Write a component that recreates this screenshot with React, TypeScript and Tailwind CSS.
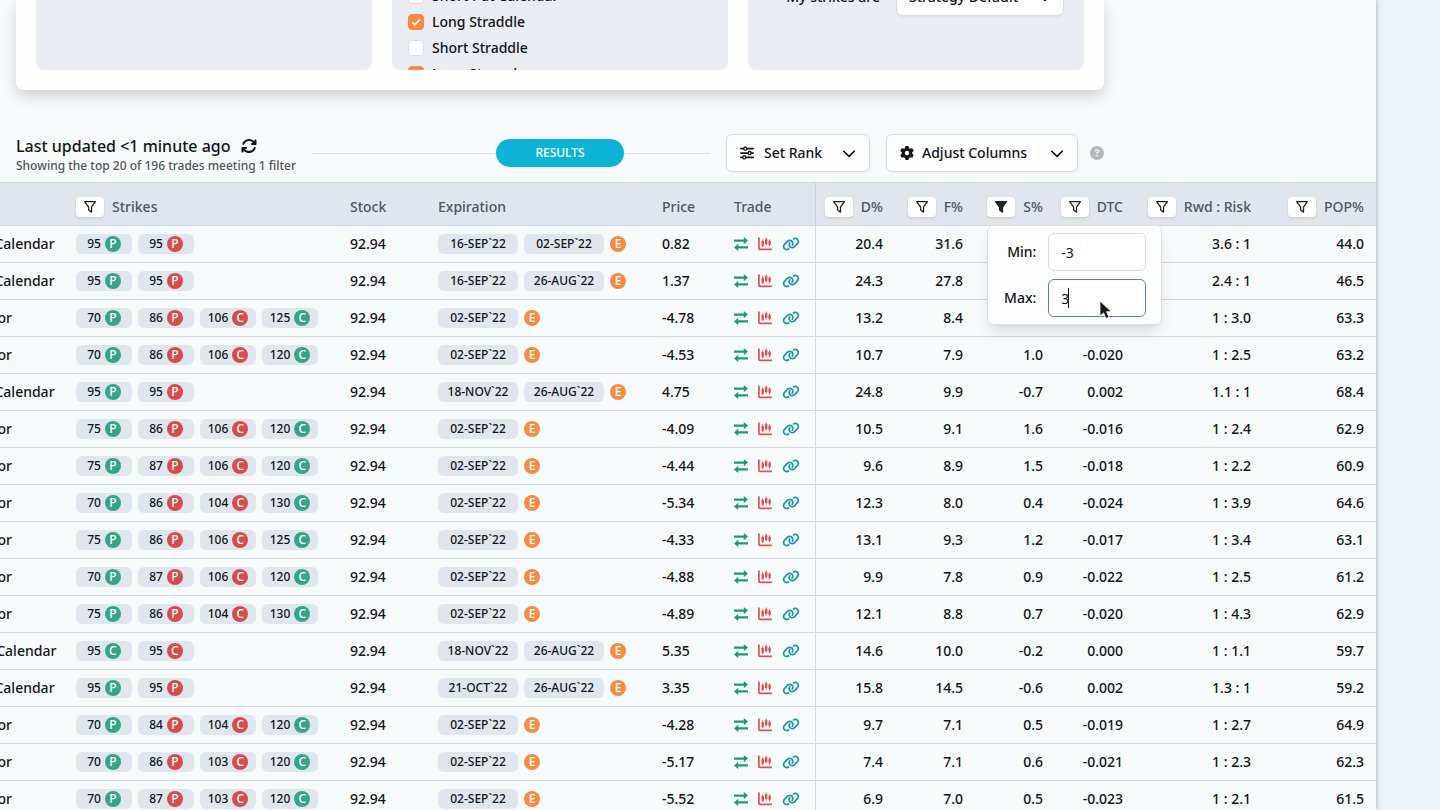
import { useEffect, useRef } from "react";
import {
    FaArrowsRotate,
    FaChevronDown,
    FaCircleQuestion,
    FaGear,
    FaLink,
    FaSliders,
} from "react-icons/fa6";

type Trade = {
    strategy: string;
    strikes: string[];
    expirations: string[];
    price: string;
    d: string;
    f: string;
    s: string;
    dtc: string;
    ratio: string;
    pop: string;
};

const row = (
    strategy: string,
    strikes: string,
    expirations: string,
    values: string
): Trade => {
    const [price, d, f, s, dtc, ratio, pop] = values.split(" ");
    return {
        strategy,
        strikes: strikes.split(" "),
        expirations: expirations.split(" "),
        price,
        d,
        f,
        s,
        dtc,
        ratio: ratio.replace(":", " : "),
        pop,
    };
};

// strikes: price, option type, then + for long or - for short
const trades: Trade[] = [
    row("Long Put Calendar", "95P+ 95P-", "16-SEP`22 02-SEP`22", "0.82 20.4 31.6   3.6:1 44.0"),
    row("Long Put Calendar", "95P+ 95P-", "16-SEP`22 26-AUG`22", "1.37 24.3 27.8   2.4:1 46.5"),
    row("Iron Condor", "70P+ 86P- 106C- 125C+", "02-SEP`22", "-4.78 13.2 8.4   1:3.0 63.3"),
    row("Iron Condor", "70P+ 86P- 106C- 120C+", "02-SEP`22", "-4.53 10.7 7.9 1.0 -0.020 1:2.5 63.2"),
    row("Long Put Calendar", "95P+ 95P-", "18-NOV`22 26-AUG`22", "4.75 24.8 9.9 -0.7 0.002 1.1:1 68.4"),
    row("Iron Condor", "75P+ 86P- 106C- 120C+", "02-SEP`22", "-4.09 10.5 9.1 1.6 -0.016 1:2.4 62.9"),
    row("Iron Condor", "75P+ 87P- 106C- 120C+", "02-SEP`22", "-4.44 9.6 8.9 1.5 -0.018 1:2.2 60.9"),
    row("Iron Condor", "70P+ 86P- 104C- 130C+", "02-SEP`22", "-5.34 12.3 8.0 0.4 -0.024 1:3.9 64.6"),
    row("Iron Condor", "75P+ 86P- 106C- 125C+", "02-SEP`22", "-4.33 13.1 9.3 1.2 -0.017 1:3.4 63.1"),
    row("Iron Condor", "70P+ 87P- 106C- 120C+", "02-SEP`22", "-4.88 9.9 7.8 0.9 -0.022 1:2.5 61.2"),
    row("Iron Condor", "75P+ 86P- 104C- 130C+", "02-SEP`22", "-4.89 12.1 8.8 0.7 -0.020 1:4.3 62.9"),
    row("Long Call Calendar", "95C+ 95C-", "18-NOV`22 26-AUG`22", "5.35 14.6 10.0 -0.2 0.000 1:1.1 59.7"),
    row("Long Put Calendar", "95P+ 95P-", "21-OCT`22 26-AUG`22", "3.35 15.8 14.5 -0.6 0.002 1.3:1 59.2"),
    row("Iron Condor", "70P+ 84P- 104C- 120C+", "02-SEP`22", "-4.28 9.7 7.1 0.5 -0.019 1:2.7 64.9"),
    row("Iron Condor", "70P+ 86P- 103C- 120C+", "02-SEP`22", "-5.17 7.4 7.1 0.6 -0.021 1:2.3 62.3"),
    row("Iron Condor", "70P+ 87P- 103C- 120C+", "02-SEP`22", "-5.52 6.9 7.0 0.5 -0.023 1:2.1 61.5"),
];

const strategies = [
    { name: "Short Put Calendar", checked: false },
    { name: "Long Straddle", checked: true },
    { name: "Short Straddle", checked: false },
    { name: "Long Strangle", checked: true },
];

const FunnelIcon = ({ filled = false }: { filled?: boolean }) => (
    <svg
        viewBox="0 0 14 14"
        className="size-3.5"
        fill={filled ? "currentColor" : "none"}
        stroke="currentColor"
        strokeWidth="1.3"
        strokeLinejoin="round"
    >
        <path d="M1.6 1.7h10.8L8.5 7.2v4.9L5.6 10V7.2z" />
    </svg>
);

const ExchangeIcon = () => (
    <svg viewBox="0 0 14 14" className="size-3.5 text-[#1a9c74]" fill="currentColor">
        <path d="M0 2.6h9.8V0L14 3.6 9.8 7.2V4.7H0zM14 9.3H4.2V6.8L0 10.4 4.2 14v-2.6H14z" />
    </svg>
);

const CandlesIcon = () => (
    <svg
        viewBox="0 0 14 14"
        className="size-3.5 text-[#e0504f]"
        fill="none"
        stroke="currentColor"
    >
        <path
            d="M.9 1v10.2c0 .7.4 1.1 1.1 1.1h11.3"
            strokeWidth="1.7"
            strokeLinecap="round"
        />
        <path d="M4.7 2.4v7.6M8.2.6v8M11.6 2.4v7" strokeWidth="1" />
        <path d="M4.7 4v4.8M8.2 2.2v4.8M11.6 3.8v4" strokeWidth="2.4" />
    </svg>
);

const FilterButton = ({ label, filled = false }: { label: string; filled?: boolean }) => (
    <button
        aria-label={`Filter ${label}`}
        className="flex h-5 w-7 items-center justify-center rounded bg-white text-[#1d2429] shadow-sm"
    >
        <FunnelIcon filled={filled} />
    </button>
);

const Badge = ({ letter, color }: { letter: string; color: string }) => (
    <span
        className={`flex size-4 shrink-0 items-center justify-center rounded-full text-xs font-medium leading-4 text-white ${color}`}
    >
        {letter}
    </span>
);

const Strike = ({ value }: { value: string }) => {
    const [, price, type, side] = value.match(/^(\d+)([PC])([+-])$/)!;
    return (
        <span className="flex h-5 w-14 items-center justify-center gap-1 rounded-md bg-[#dfe6ee] text-xs">
            {price}
            <Badge letter={type} color={side === "+" ? "bg-[#34a587]" : "bg-[#d94c4c]"} />
        </span>
    );
};

const RangeFilter = () => {
    const maxRef = useRef<HTMLInputElement>(null);

    useEffect(() => {
        maxRef.current?.focus();
        maxRef.current?.setSelectionRange(1, 1);
    }, []);

    const inputClass =
        "h-[38px] w-[98px] rounded-md border border-[#d5dbe3] bg-white px-3 text-sm font-normal caret-transparent outline-none focus:border-[#3f86d8]";

    return (
        <div className="absolute top-7 left-0 z-10 flex w-[175px] flex-col gap-2 rounded-md border border-[#dce1e7] bg-[#fdfdfe] py-[7px] pr-[15px] text-[#111518] shadow-lg">
            <label className="flex items-center justify-end gap-3">
                Min:
                <input className={inputClass} defaultValue="-3" />
            </label>
            <label className="flex items-center justify-end gap-3">
                Max:
                <input ref={maxRef} className={inputClass} defaultValue="3" />
            </label>
            {/* steady caret */}
            <span className="pointer-events-none absolute bottom-4 left-20 h-5 w-px bg-[#111518]" />
            <svg
                viewBox="0 0 14 20"
                className="pointer-events-none absolute right-12 bottom-1 h-5 w-3.5"
                fill="#15191c"
                stroke="#fff"
                strokeWidth=".8"
            >
                <path d="M1 1v15.2l3.5-3.3 2.6 5.6 3-1.3-2.6-5.5h4.9z" />
            </svg>
        </div>
    );
};

const NumberHeader = ({ label, filtered = false }: { label: string; filtered?: boolean }) => (
    <th className="pt-1.5 pr-2 font-medium last:pr-3">
        <div className="flex items-center justify-end gap-2">
            <div className="relative">
                <FilterButton label={label} filled={filtered} />
                {filtered && <RangeFilter />}
            </div>
            {label}
        </div>
    </th>
);

const TradeRow = ({ trade }: { trade: Trade }) => (
    <tr className="h-[37px] border-b border-[#d0d9e4]">
        <td className="pl-[19px] whitespace-nowrap">{trade.strategy}</td>
        <td className="pl-2">
            <div className="flex gap-1.5">
                {trade.strikes.map((strike) => (
                    <Strike key={strike} value={strike} />
                ))}
            </div>
        </td>
        <td className="pl-2">92.94</td>
        <td className="pl-2">
            <div className="flex items-center gap-1.5">
                {trade.expirations.map((date) => (
                    <span
                        key={date}
                        className="h-5 w-20 rounded-md bg-[#dfe6ee] text-center text-xs leading-5"
                    >
                        {date}
                    </span>
                ))}
                <Badge letter="E" color="bg-[#f68b42]" />
            </div>
        </td>
        <td className="pl-2">{trade.price}</td>
        <td className="border-r border-[#d0d9e4] pl-2">
            <div className="flex items-center gap-2.5">
                <button aria-label="Trade">
                    <ExchangeIcon />
                </button>
                <button aria-label="Chart">
                    <CandlesIcon />
                </button>
                <a href="#link" aria-label="Link" className="text-[#1e97ab]">
                    <FaLink className="h-3.5 w-[18px]" />
                </a>
            </div>
        </td>
        <td className="pr-2 text-right">{trade.d}</td>
        <td className="pr-2 text-right">{trade.f}</td>
        <td className="pr-2 text-right">{trade.s}</td>
        <td className="pr-2 text-right">{trade.dtc}</td>
        <td className="pr-2 text-right">{trade.ratio}</td>
        <td className="pr-3 text-right">{trade.pop}</td>
    </tr>
);

const StrategyPanels = () => (
    <div className="grid max-w-[1088px] grid-cols-3 gap-5 rounded-b-lg bg-[#fefefe] px-5 pb-5 shadow-[0_6px_14px_rgba(0,0,0,0.16)]">
        <div className="h-[70px] rounded-b-lg bg-[#eaedf4]"></div>
        <div className="h-[70px] overflow-hidden rounded-b-lg bg-[#eaedf4] pl-4">
            <div className="-mt-[17px]">
                {strategies.map(({ name, checked }) => (
                    <label key={name} className="flex h-[26px] items-center gap-2">
                        <span className="grid size-4">
                            <input
                                type="checkbox"
                                defaultChecked={checked}
                                className="peer col-start-1 row-start-1 size-4 appearance-none rounded border border-[#d9dee5] bg-white checked:border-[#f68b42] checked:bg-[#f68b42]"
                            />
                            <svg
                                viewBox="0 0 16 16"
                                className="pointer-events-none invisible col-start-1 row-start-1 size-4 peer-checked:visible"
                                fill="none"
                                stroke="#fff"
                                strokeWidth="1.6"
                            >
                                <path d="M4.3 8.3l2.5 2.5 5-5.2" />
                            </svg>
                        </span>
                        {name}
                    </label>
                ))}
            </div>
        </div>
        <div className="h-[70px] overflow-hidden rounded-b-lg bg-[#eaedf4] pr-5">
            <div className="-mt-[22px] flex items-center justify-end gap-4">
                <label htmlFor="strikes">My strikes are</label>
                <div className="grid w-[168px] items-center">
                    <select
                        id="strikes"
                        className="col-start-1 row-start-1 h-[38px] appearance-none rounded-md border border-[#d5dbe3] bg-white px-3 shadow-xs"
                    >
                        <option>Strategy Default</option>
                    </select>
                    <FaChevronDown className="pointer-events-none col-start-1 row-start-1 mr-3 size-3.5 justify-self-end" />
                </div>
            </div>
        </div>
    </div>
);

const Toolbar = () => {
    const buttonClass =
        "flex h-[38px] items-center rounded-md border border-[#d5dbe3] bg-[#fdfdfe] px-[13px] shadow-xs";

    return (
        <div className="flex h-[38px] max-w-[1088px] items-center gap-4">
            <div className="self-start whitespace-nowrap">
                <div className="flex items-center gap-2.5 text-base leading-6">
                    Last updated &lt;1 minute ago
                    <button aria-label="Refresh">
                        <FaArrowsRotate className="size-4" />
                    </button>
                </div>
                <div className="text-xs leading-4 text-[#50575d]">
                    Showing the top 20 of 196 trades meeting 1 filter
                </div>
            </div>
            <div className="flex flex-1 items-center">
                <div className="h-px flex-1 bg-[#dbe2ea]"></div>
                <button className="h-7 w-32 rounded-full bg-[#0cb4d6] text-xs text-white">
                    RESULTS
                </button>
                <div className="h-px w-[86px] bg-[#dbe2ea]"></div>
            </div>
            <button className={`${buttonClass} w-36`}>
                <FaSliders className="mr-2.5 size-3.5" />
                Set Rank
                <FaChevronDown className="ml-auto size-3.5" />
            </button>
            <button className={`${buttonClass} w-48`}>
                <FaGear className="mr-2 size-3.5" />
                Adjust Columns
                <FaChevronDown className="ml-auto size-3.5" />
            </button>
            <button aria-label="Help" className="-ml-1 text-[#b1b7bd]">
                <FaCircleQuestion className="size-3.5" />
            </button>
        </div>
    );
};

export default function App() {
    return (
        <div className="flex h-screen overflow-hidden bg-[#eef3f7] font-['Noto_Sans',sans-serif] text-sm font-medium text-[#111518]">
            <main className="min-w-0 flex-1 overflow-hidden bg-[#f7fafb] shadow-[0_0_4px_rgba(90,105,125,0.6)]">
                <div className="px-4">
                    <StrategyPanels />
                    <div className="pt-11 pb-2.5">
                        <Toolbar />
                    </div>
                </div>
                {/* the table is scrolled sideways, part of the first column is cut off */}
                <table className="-ml-[88px] w-[calc(100%+88px)] table-fixed border-collapse">
                    <colgroup>
                        <col className="w-[156px]" />
                        <col />
                        <col className="w-[88px]" />
                        <col className="w-[224px]" />
                        <col className="w-[72px]" />
                        <col className="w-[89px]" />
                        <col className="w-[76px]" />
                        <col className="w-[80px]" />
                        <col className="w-[80px]" />
                        <col className="w-[80px]" />
                        <col className="w-[128px]" />
                        <col className="w-[117px]" />
                    </colgroup>
                    <thead>
                        <tr className="h-[43px] border-y border-[#d0d9e4] bg-[#dfe6ee] text-left text-[#50575d]">
                            <th className="pt-1.5 pl-[19px] font-medium">Strategy</th>
                            <th className="pt-1.5 pl-2 font-medium">
                                <div className="flex items-center gap-2">
                                    <FilterButton label="Strikes" />
                                    Strikes
                                </div>
                            </th>
                            <th className="pt-1.5 pl-2 font-medium">Stock</th>
                            <th className="pt-1.5 pl-2 font-medium">Expiration</th>
                            <th className="pt-1.5 pl-2 font-medium">Price</th>
                            <th className="border-r border-[#c9d2dd] pt-1.5 pl-2 font-medium">Trade</th>
                            <NumberHeader label="D%" />
                            <NumberHeader label="F%" />
                            <NumberHeader label="S%" filtered />
                            <NumberHeader label="DTC" />
                            <NumberHeader label="Rwd : Risk" />
                            <NumberHeader label="POP%" />
                        </tr>
                    </thead>
                    <tbody>
                        {trades.map((trade, index) => (
                            <TradeRow key={index} trade={trade} />
                        ))}
                    </tbody>
                </table>
            </main>
            <aside className="w-16 shrink-0"></aside>
        </div>
    );
}
